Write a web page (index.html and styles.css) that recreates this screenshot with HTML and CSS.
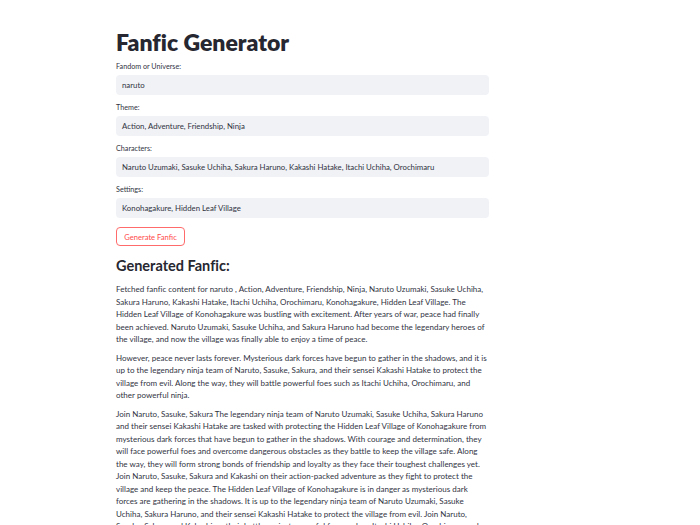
FILE: index.html
```html
<!DOCTYPE html>
<html lang="en">
<head>
<meta charset="utf-8">
<title>Fanfic Generator</title>
<link rel="stylesheet" href="styles.css">
</head>
<body>
<main class="app">
  <h1 class="title">Fanfic Generator</h1>
  <div class="field">
    <label class="label">Fandom or Universe:</label>
    <div class="input">naruto</div>
  </div>
  <div class="field">
    <label class="label">Theme:</label>
    <div class="input">Action, Adventure, Friendship, Ninja</div>
  </div>
  <div class="field">
    <label class="label">Characters:</label>
    <div class="input">Naruto Uzumaki, Sasuke Uchiha, Sakura Haruno, Kakashi Hatake, Itachi Uchiha, Orochimaru</div>
  </div>
  <div class="field">
    <label class="label">Settings:</label>
    <div class="input">Konohagakure, Hidden Leaf Village</div>
  </div>
  <div class="actions">
    <button class="btn">Generate Fanfic</button>
  </div>
  <h3 class="subtitle">Generated Fanfic:</h3>
  <div class="story">
    <p>Fetched fanfic content for naruto , Action, Adventure, Friendship, Ninja, Naruto Uzumaki, Sasuke Uchiha,<br>
    Sakura Haruno, Kakashi Hatake, Itachi Uchiha, Orochimaru, Konohagakure, Hidden Leaf Village. The<br>
    Hidden Leaf Village of Konohagakure was bustling with excitement. After years of war, peace had finally<br>
    been achieved. Naruto Uzumaki, Sasuke Uchiha, and Sakura Haruno had become the legendary heroes of<br>
    the village, and now the village was finally able to enjoy a time of peace.</p>
    <p>However, peace never lasts forever. Mysterious dark forces have begun to gather in the shadows, and it is<br>
    up to the legendary ninja team of Naruto, Sasuke, Sakura, and their sensei Kakashi Hatake to protect the<br>
    village from evil. Along the way, they will battle powerful foes such as Itachi Uchiha, Orochimaru, and<br>
    other powerful ninja.</p>
    <p>Join Naruto, Sasuke, Sakura The legendary ninja team of Naruto Uzumaki, Sasuke Uchiha, Sakura Haruno<br>
    and their sensei Kakashi Hatake are tasked with protecting the Hidden Leaf Village of Konohagakure from<br>
    mysterious dark forces that have begun to gather in the shadows. With courage and determination, they<br>
    will face powerful foes and overcome dangerous obstacles as they battle to keep the village safe. Along<br>
    the way, they will form strong bonds of friendship and loyalty as they face their toughest challenges yet.<br>
    Join Naruto, Sasuke, Sakura and Kakashi on their action-packed adventure as they fight to protect the<br>
    village and keep the peace. The Hidden Leaf Village of Konohagakure is in danger as mysterious dark<br>
    forces are gathering in the shadows. It is up to the legendary ninja team of Naruto Uzumaki, Sasuke<br>
    Uchiha, Sakura Haruno, and their sensei Kakashi Hatake to protect the village from evil. Join Naruto,<br>
    Sasuke, Sakura and Kakashi on their battle against powerful foes such as Itachi Uchiha, Orochimaru and<br>
    other powerful ninja.</p>
  </div>
</main>
</body>
</html>
```
FILE: styles.css
```css
html, body {
  margin: 0;
  padding: 0;
  background: #ffffff;
}
body {
  font-family: "Lato", "Open Sans", sans-serif;
  color: #31333f;
}
.app {
  width: 373px;
  padding: 28px 0 40px 116px;
  display: flex;
  flex-direction: column;
}
.title {
  margin: 0 0 6px 0;
  font-size: 23px;
  line-height: 28px;
  font-weight: 800;
  color: #262730;
  font-variant-ligatures: none;
}
.field {
  display: flex;
  flex-direction: column;
  gap: 3px;
  margin-bottom: 8px;
}
.label {
  font-size: 7.2px;
  line-height: 10px;
  color: #31333f;
}
.input {
  height: 20px;
  box-sizing: border-box;
  background: #f0f2f6;
  border-radius: 4px;
  padding: 0 6px;
  font-size: 7.8px;
  line-height: 20px;
  white-space: nowrap;
  overflow: hidden;
}
.actions {
  margin-top: 1px;
  display: flex;
}
.btn {
  height: 19px;
  width: 69px;
  padding: 0;
  background: #ffffff;
  border: 1px solid #ff6b6b;
  border-radius: 4px;
  color: #ff4b4b;
  font-family: "Lato", "Open Sans", sans-serif;
  font-size: 7.6px;
}
.subtitle {
  margin: 10px 0 7px 0;
  font-size: 14.5px;
  line-height: 20px;
  font-weight: 700;
  color: #262730;
  font-variant-ligatures: none;
}
.story p {
  margin: 0 0 6px 0;
  font-size: 8px;
  letter-spacing: 0.02px;
  line-height: 12.5px;
  white-space: nowrap;
}
```
